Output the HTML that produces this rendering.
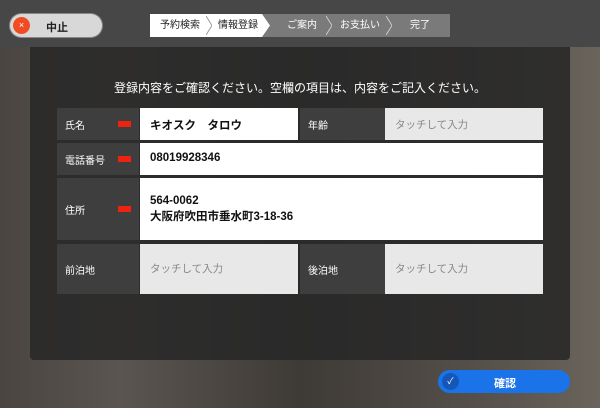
<!DOCTYPE html><html><head><meta charset="utf-8"><style>
body{margin:0;width:600px;height:408px;overflow:hidden;font-family:"Liberation Sans","Noto Sans CJK JP",sans-serif;
background:linear-gradient(90deg,#4a4540 0%,#5a5550 20%,#3e3a36 50%,#55504a 80%,#6a645c 100%);position:relative}
.top{position:absolute;left:0;top:0;width:600px;height:47px;background:#474747}
.cancel{position:absolute;left:10px;top:14px;width:92px;height:23px;border-radius:12px;background:#d8d8d8;box-shadow:0 0 0 1px #888}
.cancel .x{position:absolute;left:3px;top:3px;width:17px;height:17px;border-radius:50%;background:#f04b23;color:#fff;font-size:9px;text-align:center;line-height:17px}
.cancel span{position:absolute;left:36px;top:5px;font-size:11px;font-weight:bold;color:#222}
.steps{position:absolute;left:150px;top:14px;width:300px;height:23px;background:#7a7a7a}
.steps div{position:absolute;top:0;font-size:10px;line-height:23px;color:#fff;text-align:center;width:60px}
.steps .wb{left:0;top:0;width:120px;height:23px;background:#fff;clip-path:polygon(0 0,112px 0,120px 50%,112px 100%,0 100%)}
.chev{position:absolute;top:2px;width:6px;height:19px}
.l{position:absolute;background:#3e3e3e;color:#fff;font-size:10px}
.l span{position:absolute;left:8px}
.req{position:absolute;right:8px;width:13px;height:6px;background:#e21;font-size:4px;color:#fff}
.v{position:absolute;background:#fff;font-size:11.5px;font-weight:bold;color:#111}
.e{background:#e8e8e8;color:#888;font-weight:normal;font-size:10.5px}
.panel{position:absolute;left:30px;top:47px;width:540px;height:313px;background:rgba(40,40,40,.88);border-radius:0 0 4px 4px}
.h{position:absolute;left:0;width:600px;top:79px;text-align:center;color:#fff;font-size:12px}
.ok{position:absolute;left:438px;top:370px;width:132px;height:23px;border-radius:12px;background:#1a73e8}
.ok .c{position:absolute;left:4px;top:3px;width:17px;height:17px;border-radius:50%;background:#1557b8;color:#fff;font-size:9px;text-align:center;line-height:17px}
.ok span{position:absolute;left:56px;top:5px;color:#fff;font-size:11px;font-weight:bold}
</style></head><body>
<div class="top"></div>
<div class="cancel"><div class="x">×</div><span>中止</span></div>
<div class="steps"><div class="wb"></div>
<svg class="chev" style="left:56px" viewBox="0 0 6 19"><path d="M0 0L6 9.5L0 19" fill="none" stroke="#999" stroke-width="1"/></svg>
<svg class="chev" style="left:176px" viewBox="0 0 6 19"><path d="M0 0L6 9.5L0 19" fill="none" stroke="#ccc" stroke-width="1"/></svg>
<svg class="chev" style="left:236px" viewBox="0 0 6 19"><path d="M0 0L6 9.5L0 19" fill="none" stroke="#ccc" stroke-width="1"/></svg>
<div style="left:0;color:#222">予約検索</div><div style="left:58px;color:#222">情報登録</div><div style="left:122px">ご案内</div><div style="left:180px">お支払い</div><div style="left:240px">完了</div></div>
<div class="panel"></div>
<div class="h">登録内容をご確認ください。空欄の項目は、内容をご記入ください。</div>
<div class="l" style="left:57px;top:108px;width:82px;height:32px"><span style="top:9px">氏名</span><div class="req" style="top:13px"></div></div>
<div class="v" style="left:140px;top:108px;width:158px;height:32px"><span style="position:absolute;left:10px;top:9px">キオスク　タロウ</span></div>
<div class="l" style="left:300px;top:108px;width:85px;height:32px"><span style="top:9px">年齢</span></div>
<div class="v e" style="left:385px;top:108px;width:158px;height:32px"><span style="position:absolute;left:10px;top:9px">タッチして入力</span></div>
<div class="l" style="left:57px;top:143px;width:82px;height:32px"><span style="top:9px">電話番号</span><div class="req" style="top:13px"></div></div>
<div class="v" style="left:140px;top:143px;width:403px;height:32px"><span style="position:absolute;left:10px;top:9px">08019928346</span></div>
<div class="l" style="left:57px;top:178px;width:82px;height:62px"><span style="top:24px">住所</span><div class="req" style="top:28px"></div></div>
<div class="v" style="left:140px;top:178px;width:403px;height:62px"><span style="position:absolute;left:10px;top:15px;line-height:16px">564-0062<br>大阪府吹田市垂水町3-18-36</span></div>
<div class="l" style="left:57px;top:244px;width:82px;height:50px"><span style="top:18px">前泊地</span></div>
<div class="v e" style="left:140px;top:244px;width:158px;height:50px"><span style="position:absolute;left:10px;top:17px">タッチして入力</span></div>
<div class="l" style="left:300px;top:244px;width:85px;height:50px"><span style="top:18px">後泊地</span></div>
<div class="v e" style="left:385px;top:244px;width:158px;height:50px"><span style="position:absolute;left:10px;top:17px">タッチして入力</span></div>
<div class="ok"><div class="c">✓</div><span>確認</span></div>
</body></html>
